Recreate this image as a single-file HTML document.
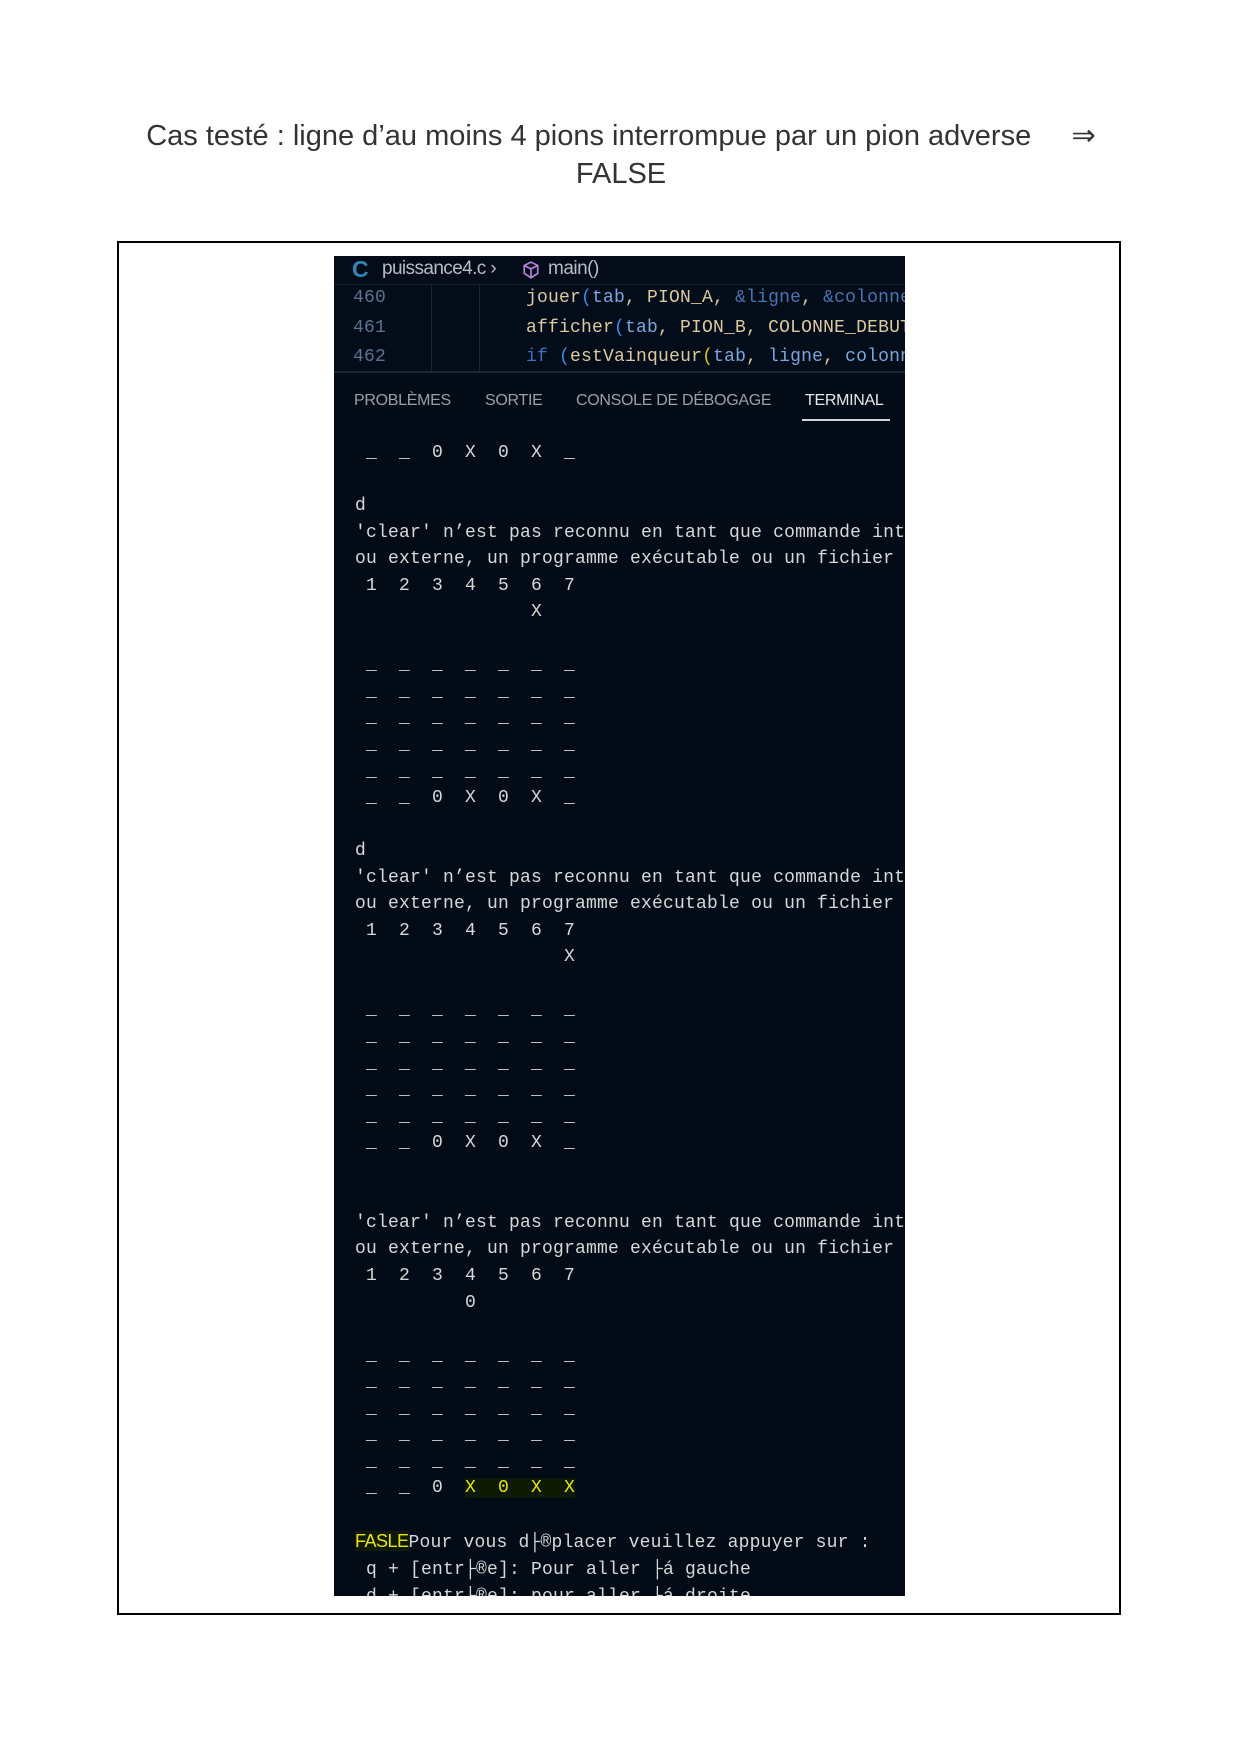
<!DOCTYPE html>
<html><head><meta charset="utf-8"><style>
body{margin:0;width:1242px;height:1755px;background:#fff;position:relative;overflow:hidden;font-family:"Liberation Sans",sans-serif}
.t{position:absolute;left:0;width:1242px;text-align:center;font-size:29px;color:#333;line-height:38px}
.box{position:absolute;left:117px;top:241px;width:1000px;height:1370px;border:2px solid #000}
.img{position:absolute;left:334px;top:256px;width:571px;height:1340px;background:#020b16;overflow:hidden}
.mono{font-family:"Liberation Mono",monospace;font-size:18px;letter-spacing:0.2px;white-space:pre}
.term{position:absolute;left:21px;top:184px;line-height:26.55px;color:#d8d8d8;margin:0}
.y{color:#e8e414;background:#0f1a05}
.tab{position:absolute;top:136px;font-size:16px;color:#9aa0aa;letter-spacing:-0.3px}
</style></head><body>
<div class="t" style="top:117px">Cas testé : ligne d’au moins 4 pions interrompue par un pion adverse &nbsp;&nbsp;&nbsp;&nbsp;⇒</div>
<div class="t" style="top:155px">FALSE</div>
<div class="box"></div>
<div class="img">
  <div style="position:absolute;left:0;top:0;width:571px;height:28px;background:#030c18"></div>
  <div style="position:absolute;left:18px;top:-1px;font-size:23px;font-weight:bold;color:#2f86b4;line-height:28px">C</div>
  <div style="position:absolute;left:48px;top:-1px;font-size:19px;color:#b8bcc4;line-height:28px;letter-spacing:-0.6px">puissance4.c ›</div>
  <svg style="position:absolute;left:188px;top:5px" width="18" height="18" viewBox="0 0 16 16"><path d="M8 1 L14 4 L14 11 L8 15 L2 11 L2 4 Z M2 4 L8 7 L14 4 M8 7 L8 15" fill="none" stroke="#b180d7" stroke-width="1.5"/></svg>
  <div style="position:absolute;left:214px;top:-1px;font-size:19px;color:#b8bcc4;line-height:28px;letter-spacing:-0.5px">main()</div>
  <div style="position:absolute;left:0;top:28px;width:571px;height:86px;background:#030d19;border-top:1px solid #14202e;border-bottom:2px solid #1a2838"></div>
  <div style="position:absolute;left:97px;top:29px;width:1px;height:86px;background:#18283a"></div>
  <div style="position:absolute;left:145px;top:29px;width:1px;height:86px;background:#18283a"></div>
  <div class="mono" style="position:absolute;left:19px;top:28px;line-height:29.5px;color:#5f7390">460
461
462</div>
  <div class="mono" style="position:absolute;left:192px;top:28px;line-height:29.5px;color:#dcc8a0"><span>jouer</span><span style="color:#3a8ee6">(</span><span style="color:#7aa6dc">tab</span>, PION_A, <span style="color:#4a74b0">&amp;ligne</span>, <span style="color:#4a74b0">&amp;colonne</span>
afficher<span style="color:#3a8ee6">(</span><span style="color:#7aa6dc">tab</span>, PION_B, COLONNE_DEBUT
<span style="color:#3a72c0">if</span> <span style="color:#3a8ee6">(</span>estVainqueur<span style="color:#e0c020">(</span><span style="color:#7aa6dc">tab</span>, <span style="color:#7aa6dc">ligne</span>, <span style="color:#7aa6dc">colonne</span></div>
  <div class="tab" style="left:20px">PROBLÈMES</div>
  <div class="tab" style="left:151px">SORTIE</div>
  <div class="tab" style="left:242px">CONSOLE DE DÉBOGAGE</div>
  <div class="tab" style="left:471px;color:#e8e8e8">TERMINAL</div>
  <div style="position:absolute;left:468px;top:163px;width:88px;height:2px;background:#d0d4da"></div>
<pre class="mono term"> _  _  0  X  0  X  _

d
'clear' n’est pas reconnu en tant que commande interne
ou externe, un programme exécutable ou un fichier de
 1  2  3  4  5  6  7
                X

 _  _  _  _  _  _  _
 _  _  _  _  _  _  _
 _  _  _  _  _  _  _
 _  _  _  _  _  _  _
 _  _  _  _  _  _  _
 _  _  0  X  0  X  _

d
'clear' n’est pas reconnu en tant que commande interne
ou externe, un programme exécutable ou un fichier de
 1  2  3  4  5  6  7
                   X

 _  _  _  _  _  _  _
 _  _  _  _  _  _  _
 _  _  _  _  _  _  _
 _  _  _  _  _  _  _
 _  _  _  _  _  _  _
 _  _  0  X  0  X  _


'clear' n’est pas reconnu en tant que commande interne
ou externe, un programme exécutable ou un fichier de
 1  2  3  4  5  6  7
          0

 _  _  _  _  _  _  _
 _  _  _  _  _  _  _
 _  _  _  _  _  _  _
 _  _  _  _  _  _  _
 _  _  _  _  _  _  _
 _  _  0  <span class="y">X  0  X  X</span>

<span class="y" style="font-family:'Liberation Sans',sans-serif;letter-spacing:-0.5px">FASLE</span>Pour vous d├®placer veuillez appuyer sur :
 q + [entr├®e]: Pour aller ├á gauche
 d + [entr├®e]: pour aller ├á droite</pre>
</div>
</body></html>
